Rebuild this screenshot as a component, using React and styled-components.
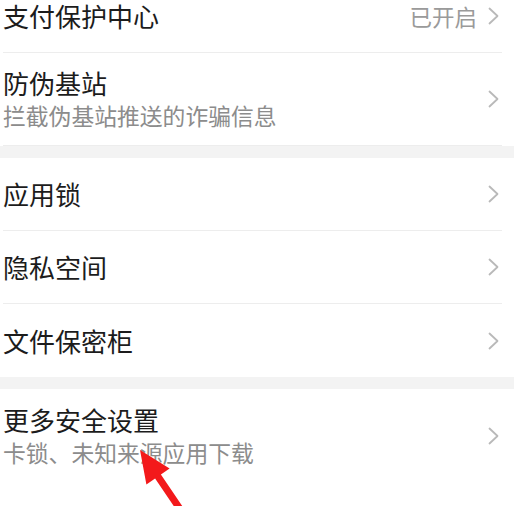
import styled, { createGlobalStyle } from 'styled-components'

const GlobalStyle = createGlobalStyle`
  html, body {
    margin: 0;
    padding: 0;
    background: #fff;
  }
  body {
    font-family: "Noto Sans CJK SC", "Noto Sans", sans-serif;
    overflow: hidden;
  }
`

const Page = styled.div`
  position: relative;
  width: 514px;
  height: 506px;
  overflow: hidden;
  background: #fff;
`

const Group = styled.div`
  background: #fff;
  &:first-child {
    margin-top: -20px;
  }
`

const Band = styled.div`
  height: 12px;
  background: #f3f3f3;
`

const Row = styled.div`
  display: flex;
  align-items: center;
  margin: 0 12px 0 3px;
  padding-right: 3px;
  box-sizing: border-box;
  height: ${(p) => (p.tall ? '93px' : '73px')};
  border-bottom: ${(p) => (p.last ? 'none' : '1px solid #ededed')};
`

const Texts = styled.div`
  flex: 1;
  display: flex;
  flex-direction: column;
  gap: 2px;
`

const Title = styled.span`
  font-size: 26px;
  line-height: 32px;
  color: #1c1c1c;
`

const Sub = styled.span`
  font-size: 22.8px;
  line-height: 30px;
  color: #8c8c8c;
`

const Value = styled.span`
  font-size: 22.5px;
  color: #9a9a9a;
  margin-right: 11px;
`

const Arrow = styled.svg`
  position: absolute;
  left: 0;
  top: 0;
  pointer-events: none;
`

function Chevron() {
  return (
    <svg width="11" height="18" viewBox="0 0 11 18">
      <polyline
        points="1.5,1.5 9.5,9 1.5,16.5"
        fill="none"
        stroke="#b9b9b9"
        strokeWidth="1.8"
        strokeLinecap="round"
        strokeLinejoin="round"
      />
    </svg>
  )
}

const groups = [
  [
    { key: 'pay', title: '支付保护中心', value: '已开启' },
    { key: 'base', title: '防伪基站', sub: '拦截伪基站推送的诈骗信息' },
  ],
  [
    { key: 'lock', title: '应用锁' },
    { key: 'private', title: '隐私空间' },
    { key: 'safe', title: '文件保密柜' },
  ],
  [
    { key: 'more', title: '更多安全设置', sub: '卡锁、未知来源应用下载' },
  ],
]

function App() {
  return (
    <Page>
      <GlobalStyle />
      {groups.map((list, gi) => (
        <div key={gi}>
          {gi > 0 && <Band />}
          <Group>
            {list.map((item, i) => (
              <Row key={item.key} tall={!!item.sub} last={i === list.length - 1 && gi > 0 ? 1 : 0}>
                <Texts>
                  <Title>{item.title}</Title>
                  {item.sub && <Sub>{item.sub}</Sub>}
                </Texts>
                {item.value && <Value>{item.value}</Value>}
                <Chevron />
              </Row>
            ))}
          </Group>
        </div>
      ))}
      <Arrow width="514" height="506" viewBox="0 0 514 506">
        <polygon
          points="140,450 169.6,468.6 160.9,474.5 182.9,507 177.1,511 155.1,478.5 146.4,484.4"
          fill="#f3191b"
        />
      </Arrow>
    </Page>
  )
}

export default App
